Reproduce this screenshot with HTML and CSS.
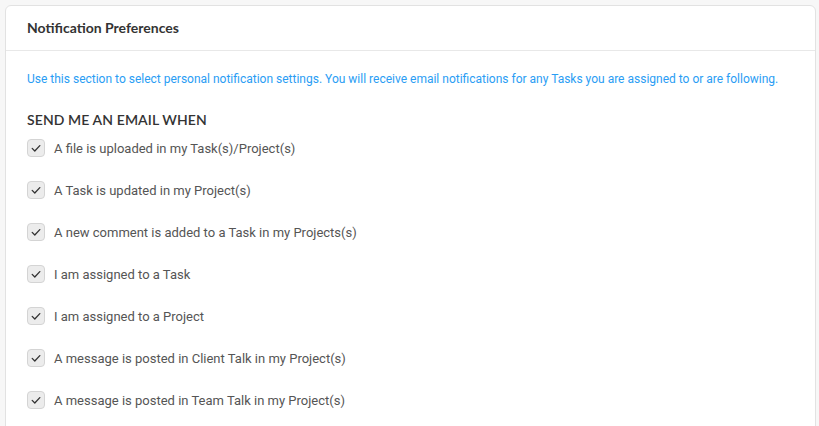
FILE: index.html
```html
<!DOCTYPE html>
<html lang="en">
<head>
<meta charset="utf-8">
<title>Notification Preferences</title>
<link rel="stylesheet" href="styles.css">
</head>
<body>
<div class="card">
  <div class="card-header">Notification Preferences</div>
  <div class="card-body">
    <p class="info">Use this section to select personal notification settings. You will receive email notifications for any Tasks you are assigned to or are following.</p>
    <h3 class="section-title">SEND ME AN EMAIL WHEN</h3>
    <ul class="options">
      <li class="option"><span class="check"><svg viewBox="0 0 16 16"><polyline points="4.2,8.4 6.8,11 11.8,5.6"/></svg></span><span>A file is uploaded in my Task(s)/Project(s)</span></li>
      <li class="option"><span class="check"><svg viewBox="0 0 16 16"><polyline points="4.2,8.4 6.8,11 11.8,5.6"/></svg></span><span>A Task is updated in my Project(s)</span></li>
      <li class="option"><span class="check"><svg viewBox="0 0 16 16"><polyline points="4.2,8.4 6.8,11 11.8,5.6"/></svg></span><span>A new comment is added to a Task in my Projects(s)</span></li>
      <li class="option"><span class="check"><svg viewBox="0 0 16 16"><polyline points="4.2,8.4 6.8,11 11.8,5.6"/></svg></span><span>I am assigned to a Task</span></li>
      <li class="option"><span class="check"><svg viewBox="0 0 16 16"><polyline points="4.2,8.4 6.8,11 11.8,5.6"/></svg></span><span>I am assigned to a Project</span></li>
      <li class="option"><span class="check"><svg viewBox="0 0 16 16"><polyline points="4.2,8.4 6.8,11 11.8,5.6"/></svg></span><span>A message is posted in Client Talk in my Project(s)</span></li>
      <li class="option"><span class="check"><svg viewBox="0 0 16 16"><polyline points="4.2,8.4 6.8,11 11.8,5.6"/></svg></span><span>A message is posted in Team Talk in my Project(s)</span></li>
    </ul>
  </div>
</div>
</body>
</html>
```
FILE: styles.css
```css
html, body {
  margin: 0;
  padding: 0;
}
body {
  background: #f7f7f7;
  padding: 5px 3px 0 5px;
  font-family: Roboto, "Liberation Sans", sans-serif;
  height: 426px;
  box-sizing: border-box;
  overflow: hidden;
}
.card {
  background: #fff;
  border: 1px solid #e2e2e2;
  border-radius: 6px;
  min-height: 440px;
}
.card-header {
  height: 44px;
  line-height: 44px;
  padding: 0 21px;
  font-family: Lato, "Noto Sans", sans-serif;
  font-weight: 700;
  font-size: 14px;
  color: #333;
  border-bottom: 1px solid #e8e8e8;
}
.card-body {
  padding: 20px 21px 0;
}
.info {
  margin: 0;
  font-size: 12px;
  line-height: 16px;
  color: #2a9df4;
}
.section-title {
  margin: 25px 0 0;
  font-family: Lato, "Noto Sans", sans-serif;
  font-size: 14px;
  font-weight: 600;
  line-height: 16px;
  color: #333;
  letter-spacing: 0.1px;
}
.options {
  list-style: none;
  margin: -1px 0 0;
  padding: 0;
}
.option {
  display: flex;
  align-items: center;
  height: 42px;
  gap: 9px;
  font-size: 13px;
  color: #555;
}
.check {
  box-sizing: border-box;
  flex: none;
  width: 18px;
  height: 18px;
  border: 1px solid #d4d4d4;
  background: #ececec;
  border-radius: 4px;
  display: flex;
  align-items: center;
  justify-content: center;
}
.check svg {
  display: block;
  width: 16px;
  height: 16px;
}
.check polyline {
  fill: none;
  stroke: #333;
  stroke-width: 1.3;
  stroke-linecap: round;
  stroke-linejoin: round;
}
```
